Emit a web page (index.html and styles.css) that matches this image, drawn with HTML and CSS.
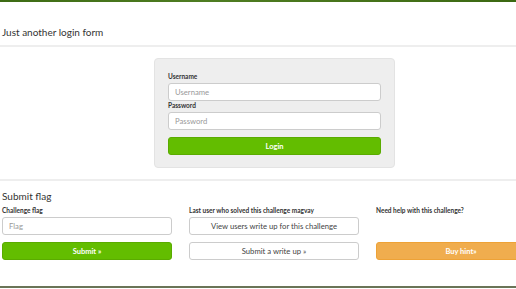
FILE: index.html
```html
<!DOCTYPE html>
<html lang="en">
<head>
  <meta charset="UTF-8">
  <title>Just another login form</title>
  <link rel="stylesheet" href="styles.css">
</head>
<body>
  <div class="top-bar"></div>

  <h3 class="page-title">Just another login form</h3>
  <hr class="rule">

  <!-- Login panel -->
  <div class="login-panel">
    <form>
      <label class="field-label">Username</label>
      <input class="field" type="text" placeholder="Username">
      <label class="field-label">Password</label>
      <input class="field" type="password" placeholder="Password">
      <button type="submit" class="btn btn-green login-btn">Login</button>
    </form>
  </div>

  <hr class="rule rule-lower">

  <!-- Submit flag -->
  <h3 class="page-title section-title">Submit flag</h3>
  <div class="flag-grid">
    <div class="col">
      <label class="field-label">Challenge flag</label>
      <input class="field" type="text" placeholder="Flag">
      <button class="btn btn-green">Submit &raquo;</button>
    </div>
    <div class="col">
      <label class="field-label">Last user who solved this challenge magvay</label>
      <button class="btn btn-white btn-tall">View users write up for this challenge</button>
      <button class="btn btn-white">Submit a write up &raquo;</button>
    </div>
    <div class="col">
      <label class="field-label">Need help with this challenge?</label>
      <div class="spacer"></div>
      <button class="btn btn-orange">Buy hint&raquo;</button>
    </div>
  </div>

  <div class="footer"></div>
</body>
</html>
```

FILE: styles.css
```css
/* General Styles */
html, body {
  overflow: hidden;
}

body {
  margin: 0;
  font-family: 'Lato', 'Open Sans', sans-serif;
  color: #333;
  background-color: #fff;
  width: 516px;
}

.top-bar {
  height: 2px;
  background: linear-gradient(90deg, #3d6b14, #4f7d22 40%, #46731a 70%, #3b6812);
}

.page-title {
  margin: 24px 0 0 2px;
  font-size: 10px;
  line-height: 12px;
  font-weight: 400;
  color: #333;
}

.rule {
  border: none;
  height: 2px;
  background-color: #eee;
  margin: 7px 0 0;
}

.rule-lower {
  margin-top: 11px;
}

.section-title {
  margin-top: 9px;
}

/* Login Panel */
.login-panel {
  width: 213px;
  margin: 11px 0 0 154px;
  padding: 13px 13px 12px;
  background-color: #eee;
  border: 1px solid #e3e3e3;
  border-radius: 4px;
  box-sizing: content-box;
}

.login-panel form {
  display: flex;
  flex-direction: column;
}

.field-label {
  display: block;
  font-size: 6.5px;
  line-height: 9px;
  font-weight: 700;
  color: #333;
  margin-bottom: 2px;
  white-space: nowrap;
}

.field {
  width: 100%;
  height: 18px;
  box-sizing: border-box;
  padding: 0 6px;
  font-family: 'Lato', sans-serif;
  font-size: 7.7px;
  border: 1px solid #ccc;
  border-radius: 3px;
  background-color: #fff;
  color: #555;
}

.field::placeholder {
  color: #999;
}

.btn {
  display: block;
  width: 100%;
  height: 18px;
  box-sizing: border-box;
  border-radius: 3px;
  font-family: 'Lato', sans-serif;
  font-size: 7.5px;
  cursor: pointer;
  padding: 0;
}

.btn-green {
  background-color: #63bd00;
  border: 1px solid #5aab00;
  color: #fff;
  font-weight: 700;
}

.login-btn {
  margin-top: 7px;
}

.btn-white {
  background-color: #fff;
  border: 1px solid #ccc;
  color: #444;
  font-size: 7.7px;
}

.btn-orange {
  background-color: #f0ad4e;
  border: 1px solid #eea236;
  color: #fff;
  font-weight: 700;
}

/* Submit flag grid */
.flag-grid {
  display: grid;
  grid-template-columns: 170px 170px 170px;
  column-gap: 17px;
  margin: 4px 0 0 2px;
  width: 544px;
}

.col {
  display: flex;
  flex-direction: column;
}

.col .btn {
  margin-top: 7px;
}

.col .btn-tall {
  margin-top: 0;
}

.spacer {
  height: 18px;
}

.footer {
  margin-top: 26px;
  height: 2px;
  background-color: #6a7457;
}
```
